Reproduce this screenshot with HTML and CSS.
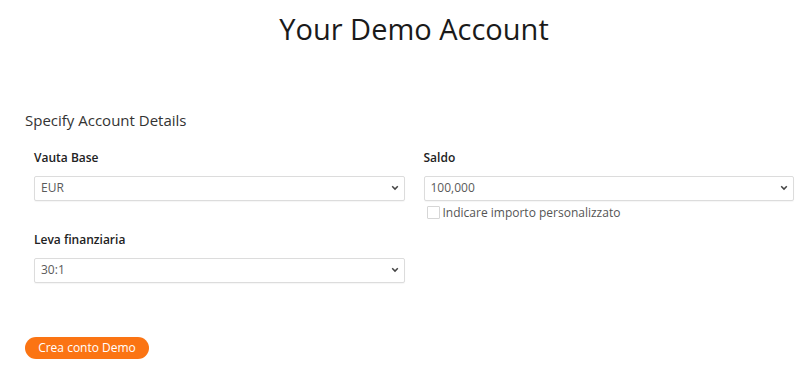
FILE: index.html
```html
<!DOCTYPE html>
<html lang="it">
<head>
<meta charset="utf-8">
<title>Your Demo Account</title>
<link rel="stylesheet" href="styles.css">
</head>
<body>
<main class="page">
  <h1 class="title">Your Demo Account</h1>
  <h2 class="subtitle">Specify Account Details</h2>
  <form class="form">
    <div class="field">
      <label class="label">Vauta Base</label>
      <div class="select-wrap">
        <select class="select"><option>EUR</option></select>
        <svg class="chev" width="8" height="6" viewBox="0 0 8 6"><path d="M1.2 1.3 L4 4.1 L6.8 1.3" fill="none" stroke="#444" stroke-width="1.5"/></svg>
      </div>
    </div>
    <div class="field">
      <label class="label">Saldo</label>
      <div class="select-wrap">
        <select class="select"><option>100,000</option></select>
        <svg class="chev" width="8" height="6" viewBox="0 0 8 6"><path d="M1.2 1.3 L4 4.1 L6.8 1.3" fill="none" stroke="#444" stroke-width="1.5"/></svg>
      </div>
      <label class="check"><span class="box"></span>Indicare importo personalizzato</label>
    </div>
    <div class="field">
      <label class="label">Leva finanziaria</label>
      <div class="select-wrap">
        <select class="select"><option>30:1</option></select>
        <svg class="chev" width="8" height="6" viewBox="0 0 8 6"><path d="M1.2 1.3 L4 4.1 L6.8 1.3" fill="none" stroke="#444" stroke-width="1.5"/></svg>
      </div>
    </div>
  </form>
  <button class="btn" type="button">Crea conto Demo</button>
</main>
</body>
</html>
```

FILE: styles.css
```css
html, body {
  margin: 0;
  padding: 0;
  background: #fff;
}
body {
  font-family: "Open Sans", "Noto Sans", sans-serif;
  color: #222;
}
.page {
  padding: 0 16px 0 25px;
}
.title {
  margin: 7px 0 0;
  padding-left: 9px;
  font-size: 29px;
  line-height: 44px;
  font-weight: 400;
  text-align: center;
  color: #1a1a1a;
}
.subtitle {
  margin: 58px 0 0;
  font-size: 15px;
  line-height: 22px;
  font-weight: 400;
  color: #333;
}
.form {
  margin: 18px 0 0;
  padding-left: 9px;
  display: grid;
  grid-template-columns: 1fr 1fr;
  column-gap: 19px;
  row-gap: 11px;
  align-items: start;
}
.field {
  display: flex;
  flex-direction: column;
}
.label {
  font-size: 12px;
  line-height: 18px;
  font-weight: 600;
  color: #222;
  margin-bottom: 8px;
}
.select-wrap {
  position: relative;
  height: 25px;
}
.select {
  appearance: none;
  -webkit-appearance: none;
  box-sizing: border-box;
  width: 100%;
  height: 25px;
  margin: 0;
  padding: 0 20px 1px 6px;
  border: 1px solid #dcdcdc;
  border-radius: 2px;
  box-shadow: 0 1px 1px rgba(0,0,0,0.04);
  background: #fff;
  font-family: "Open Sans", "Noto Sans", sans-serif;
  font-size: 12px;
  color: #5a5a5a;
  outline: none;
}
.chev {
  position: absolute;
  right: 6px;
  top: 10px;
  pointer-events: none;
}
.check {
  display: flex;
  align-items: center;
  margin-top: 4px;
  height: 16px;
  padding-left: 3px;
  font-size: 12px;
  color: #555;
}
.box {
  box-sizing: border-box;
  width: 13px;
  height: 13px;
  border: 1px solid #d6d6d6;
  border-radius: 1px;
  margin-right: 3px;
  background: #fff;
}
.btn {
  display: block;
  margin-top: 55px;
  width: 124px;
  height: 22px;
  padding: 0;
  border: none;
  border-radius: 11px;
  background: #fb7413;
  color: #fff;
  font-family: "Open Sans", "Noto Sans", sans-serif;
  font-size: 12px;
  line-height: 22px;
  cursor: pointer;
}
```
